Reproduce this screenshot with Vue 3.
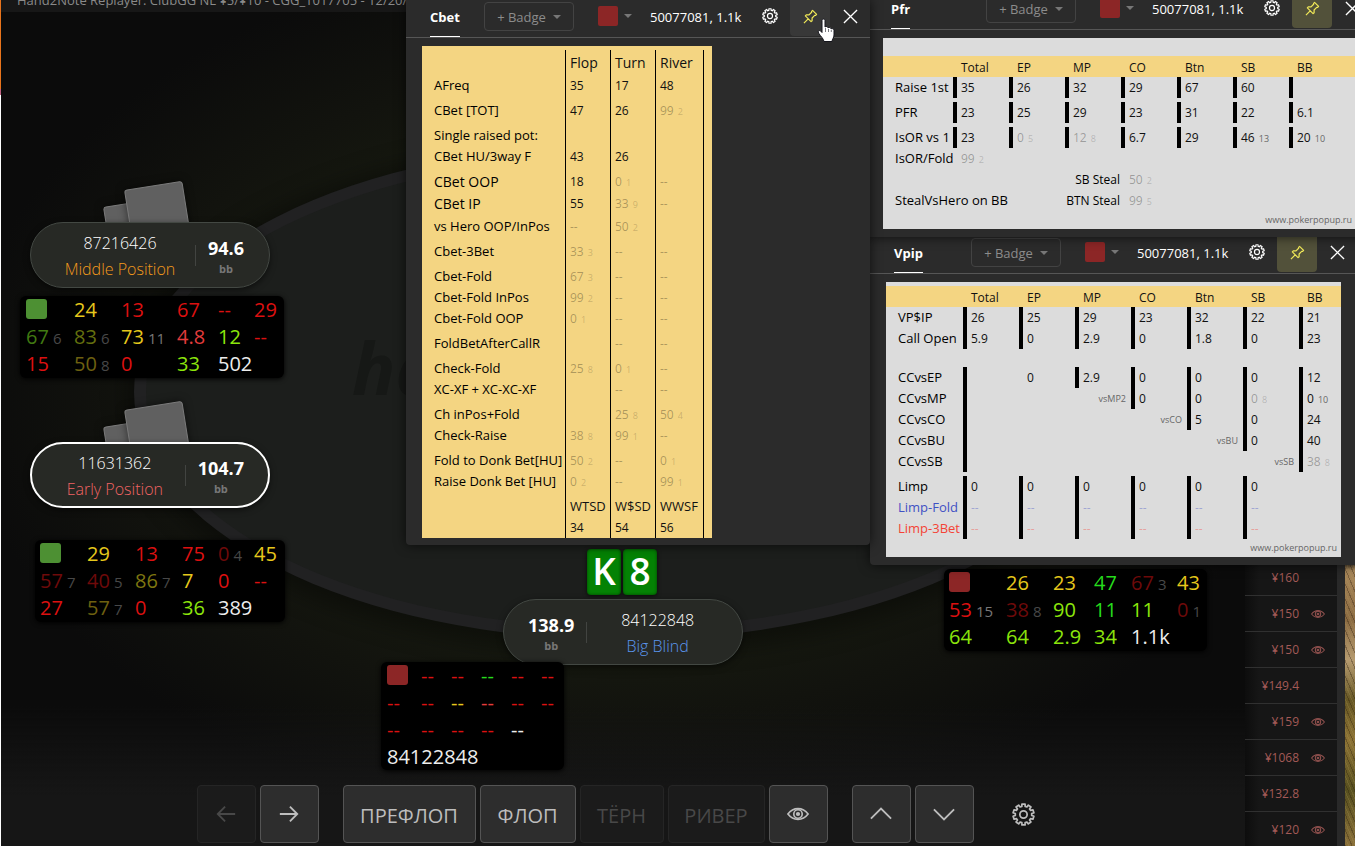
<script setup>
import { h } from 'vue'

function gearPath(teeth, outer, inner) {
  const step = (Math.PI * 2) / teeth
  const points = []
  for (let i = 0; i < teeth; i++) {
    const a = i * step - Math.PI / 2
    ;[[-0.24, outer], [0.24, outer], [0.32, inner], [0.68, inner]].forEach(([f, r]) => {
      points.push(`${(12 + Math.cos(a + f * step) * r).toFixed(2)} ${(12 + Math.sin(a + f * step) * r).toFixed(2)}`)
    })
  }
  return `M${points.join('L')}Z`
}

const stroke = { viewBox: '0 0 24 24', fill: 'none', stroke: 'currentColor', 'aria-hidden': 'true' }
const GearIcon = () => h('svg', { ...stroke, 'stroke-width': 1.8, 'stroke-linejoin': 'round' }, [
  h('path', { d: gearPath(10, 11, 8.6) }),
  h('circle', { cx: 12, cy: 12, r: 3.8 }),
])
const EyeIcon = () => h('svg', { ...stroke, 'stroke-width': 1.8 }, [
  h('path', { d: 'M1 12C4.5 7.4 8 6.2 12 6.2S19.500 7.400 23 12C19.500 16.600 16 17.800 12 17.800S4.500 16.600 1 12Z' }),
  h('circle', { cx: 12, cy: 12, r: 4.6 }),
  h('circle', { cx: 12, cy: 12, r: 1.4, fill: 'currentColor' }),
])

const cell = (t = '', n = '', dim = false) => ({ t, n, dim })
const D = cell('--', '', true)
const E = cell()
const d = (t, n) => cell(t, n, true)
const v = (t) => cell(t)

const cbetRows = [
  { label: 'AFreq', cells: [v('35'), v('17'), v('48')] },
  { label: 'CBet [TOT]', cls: 'spaced', cells: [v('47'), v('26'), d('99', '2')] },
  { label: 'Single raised pot:', cls: 'spaced', cells: [E, E, E] },
  { label: 'CBet HU/3way F', cells: [v('43'), v('26'), E] },
  { label: 'CBet OOP', cls: 'spaced large', cells: [v('18'), d('0', '1'), D] },
  { label: 'CBet IP', cls: 'large', cells: [v('55'), d('33', '9'), D] },
  { label: 'vs Hero OOP/InPos', cells: [D, d('50', '2'), E] },
  { label: 'Cbet-3Bet', cls: 'spaced', cells: [d('33', '3'), D, D] },
  { label: 'Cbet-Fold', cls: 'spaced', cells: [d('67', '3'), D, D] },
  { label: 'Cbet-Fold InPos', cells: [d('99', '2'), D, D] },
  { label: 'Cbet-Fold OOP', cells: [d('0', '1'), D, D] },
  { label: 'FoldBetAfterCallR', cls: 'spaced', cells: [E, D, D] },
  { label: 'Check-Fold', cls: 'spaced', cells: [d('25', '8'), d('0', '1'), D] },
  { label: 'XC-XF + XC-XC-XF', cells: [E, D, D] },
  { label: 'Ch inPos+Fold', cls: 'spaced', cells: [E, d('25', '8'), d('50', '4')] },
  { label: 'Check-Raise', cells: [d('38', '8'), d('99', '1'), D] },
  { label: 'Fold to Donk Bet[HU]', cls: 'spaced', cells: [d('50', '2'), D, d('0', '1')] },
  { label: 'Raise Donk Bet [HU]', cells: [d('0', '2'), D, d('99', '1')] },
  { label: '', cls: 'spaced totals', cells: [v('WTSD'), v('W$SD'), v('WWSF')] },
  { label: '', cells: [v('34'), v('54'), v('56')] },
]

const positions = ['Total', 'EP', 'MP', 'CO', 'Btn', 'SB', 'BB']
const bar = (t = '', n = '', dim = false) => ({ t, n, dim, bar: true })
const bars = (...values) => values.map((x) => bar(x))
const side = (t, span = 1) => ({ t, span, side: true })

const popups = [
  {
    id: 'vpip', title: 'Vpip', pinned: true,
    rows: [
      { label: 'VP$IP', cells: bars('26', '25', '29', '23', '32', '22', '21') },
      { label: 'Call Open', cells: bars('5.9', '0', '2.9', '0', '1.8', '0', '23') },
      { gap: 'wide' },
      { label: 'CCvsEP', cells: [bar(), v('0'), ...bars('2.9', '0', '0', '0', '12')] },
      { label: 'CCvsMP', cells: [bar(), E, { ...side('vsMP2'), small: true }, bar('0'), bar('0'), bar('0', '8', true), bar('0', '10')] },
      { label: 'CCvsCO', cells: [bar(), E, E, { ...side('vsCO'), small: true }, ...bars('5', '0', '24')] },
      { label: 'CCvsBU', cells: [bar(), E, E, E, { ...side('vsBU'), small: true }, ...bars('0', '40')] },
      { label: 'CCvsSB', cells: [bar(), E, E, E, E, { ...side('vsSB'), small: true }, bar('38', '8', true)] },
      { gap: 'thin' },
      { label: 'Limp', cells: [...bars('0', '0', '0', '0', '0', '0'), E] },
      { label: 'Limp-Fold', cls: 'blue', cells: [...Array.from({ length: 6 }, () => bar('--', '', true)), E] },
      { label: 'Limp-3Bet', cls: 'red', cells: [...Array.from({ length: 6 }, () => bar('--', '', true)), E] },
    ],
  },
  {
    id: 'pfr', title: 'Pfr', pinned: true,
    rows: [
      { label: 'Raise 1st', cells: bars('35', '26', '32', '29', '67', '60', '') },
      { gap: 'thin' },
      { label: 'PFR', cells: bars('23', '25', '29', '23', '31', '22', '6.1') },
      { gap: 'thin' },
      { label: 'IsOR vs 1', cells: [bar('23'), bar('0', '5', true), bar('12', '8', true), bar('6.7'), bar('29'), bar('46', '13'), bar('20', '10')] },
      { label: 'IsOR/Fold', cells: [d('99', '2'), E, E, E, E, E, E] },
      { label: '', cells: [E, side('SB Steal', 2), d('50', '2'), E, E, E] },
      { label: 'StealVsHero on BB', cells: [E, side('BTN Steal', 2), d('99', '5'), E, E, E] },
    ],
  },
  { id: 'cbet', title: 'Cbet', pinned: false },
]

const players = [
  { id: 'mp', name: '87216426', position: 'Middle Position', stack: '94.6', folded: true },
  { id: 'ep', name: '11631362', position: 'Early Position', stack: '104.7', folded: true },
  { id: 'hero', name: '84122848', position: 'Big Blind', stack: '138.9', folded: false },
]

const s = (t, c, n = '') => ({ t, c, n })
const x = (c = 'red') => s('--', c + ' dash')
const huds = [
  { id: 'mp', tag: 'green', cells: [
    s('24', 'yellow'), s('13', 'red'), s('67', 'red'), x(), s('29', 'red'),
    s('67', 'green-dim', '6'), s('83', 'olive-dim', '6'), s('73', 'yellow', '11'), s('4.8', 'rose'), s('12', 'lime'), x(),
    s('15', 'red'), s('50', 'yellow-dim', '8'), s('0', 'red'), s('33', 'lime'), s('502', 'white'),
  ] },
  { id: 'ep', tag: 'green', cells: [
    s('29', 'yellow'), s('13', 'red'), s('75', 'red'), s('0', 'red-dim', '4'), s('45', 'yellow'),
    s('57', 'red-dim', '7'), s('40', 'red-dim', '5'), s('86', 'olive', '7'), s('7', 'yellow'), s('0', 'red'), x(),
    s('27', 'red'), s('57', 'yellow-dim', '7'), s('0', 'red'), s('36', 'lime'), s('389', 'white'),
  ] },
  { id: 'btn', tag: 'crimson', cells: [
    s('26', 'yellow'), s('23', 'yellow'), s('47', 'green'), s('67', 'red-dim', '3'), s('43', 'yellow'),
    s('53', 'red', '15'), s('38', 'red-dim', '8'), s('90', 'lime'), s('11', 'green'), s('11', 'lime'), s('0', 'red-dim', '1'),
    s('64', 'lime'), s('64', 'lime'), s('2.9', 'lime'), s('34', 'lime'), s('1.1k', 'white'),
  ] },
  { id: 'hero', tag: 'crimson', name: '84122848', cells: [
    x(), x(), x('green'), x(), x(), x(), x(), x('yellow'), x('rose'), x(), x(), x(), x(), x(), x(), x('white'),
  ] },
]

const hands = [
  { amount: '¥160', eye: false }, { amount: '¥150', eye: true }, { amount: '¥150', eye: true },
  { amount: '¥149.4', eye: false }, { amount: '¥159', eye: true }, { amount: '¥1068', eye: true },
  { amount: '¥132.8', eye: false }, { amount: '¥120', eye: true },
]
</script>

<template>
  <div class="desktop">
    <main class="stage">
      <header class="titlebar"><span>Hand2Note Replayer: ClubGG NL ¥5/¥10 - CGG_1017705 - 12/20/2</span></header>
      <div class="felt"></div>
      <div class="watermark">ha</div>

      <section v-for="p in players" :key="p.id" class="seat" :class="'seat-' + p.id">
        <template v-if="p.folded">
          <span class="back back-rear"></span>
          <span class="back back-front"></span>
        </template>
        <div v-else class="hole-cards"><span>K</span><span>8</span></div>
        <div class="pill">
          <div class="who"><span class="name">{{ p.name }}</span><span class="position">{{ p.position }}</span></div>
          <div class="stack"><strong>{{ p.stack }}</strong><small>bb</small></div>
        </div>
      </section>

      <section v-for="hud in huds" :key="hud.id" class="hud" :class="'hud-' + hud.id">
        <span class="tag" :class="hud.tag"></span>
        <span v-for="(c, i) in hud.cells" :key="i" class="stat" :class="c.c">{{ c.t }}<small v-if="c.n">{{ c.n }}</small></span>
        <span v-if="hud.name" class="hud-name">{{ hud.name }}</span>
      </section>

      <nav class="toolbar" aria-label="Replayer">
        <div class="group">
          <button class="key square" disabled aria-label="Back"><svg viewBox="0 0 24 24" fill="none" stroke="currentColor" stroke-width="2"><path d="M22 12H3M11 4L3 12L11 20" /></svg></button>
          <button class="key square" aria-label="Forward"><svg viewBox="0 0 24 24" fill="none" stroke="currentColor" stroke-width="2"><path d="M2 12H21M13 4L21 12L13 20" /></svg></button>
        </div>
        <div class="group">
          <button class="key preflop">ПРЕФЛОП</button>
          <button class="key flop">ФЛОП</button>
          <button class="key turn" disabled>ТЁРН</button>
          <button class="key river" disabled>РИВЕР</button>
          <button class="key square" aria-label="Show cards"><EyeIcon /></button>
        </div>
        <div class="group">
          <button class="key square" aria-label="Previous hand"><svg viewBox="0 0 24 24" fill="none" stroke="currentColor" stroke-width="2"><path d="M1 17L12 6L23 17" /></svg></button>
          <button class="key square" aria-label="Next hand"><svg viewBox="0 0 24 24" fill="none" stroke="currentColor" stroke-width="2"><path d="M1 7L12 18L23 7" /></svg></button>
        </div>
        <button class="settings" aria-label="Settings"><GearIcon /></button>
      </nav>
    </main>

    <aside class="hands">
      <ul>
        <li v-for="(hand, i) in hands" :key="i"><span>{{ hand.amount }}</span><i><EyeIcon v-if="hand.eye" /></i></li>
      </ul>
    </aside>
    <div class="frame"></div>
    <div class="wallpaper"></div>

    <article v-for="w in popups" :key="w.id" class="popup" :class="'popup-' + w.id">
      <header class="popup-head">
        <h2>{{ w.title }}</h2>
        <button class="badge">+ Badge <b class="caret"></b></button>
        <button class="color" aria-label="Player colour"><i></i><b class="caret"></b></button>
        <span class="player">50077081, 1.1k</span>
        <button class="icon gear" aria-label="Settings"><GearIcon /></button>
        <button class="icon pin" :class="{ pinned: w.pinned }" aria-label="Pin">
          <svg viewBox="0 0 16 16" fill="none" stroke="currentColor" stroke-width="1.3" stroke-linejoin="round"><path d="M10.200 1.500L14.500 5.800L13.500 6.800H12.500L9.700 9.600V12.500L8.600 13.500L2.500 7.400L3.500 6.300H6.400L9.200 3.500V2.500ZM5.500 10.500L1 15" /></svg>
        </button>
        <button class="icon close" aria-label="Close"><svg viewBox="0 0 16 16" fill="none" stroke="currentColor" stroke-width="1.4"><path d="M1 1L15 15M15 1L1 15" /></svg></button>
      </header>

      <div v-if="w.id === 'cbet'" class="sheet yellow-sheet">
        <table>
          <thead><tr><th class="label"></th><th>Flop</th><th>Turn</th><th class="last">River</th><th class="edge"></th></tr></thead>
          <tbody>
            <tr v-for="(row, i) in cbetRows" :key="i" :class="row.cls">
              <th class="label">{{ row.label }}</th>
              <td v-for="(c, j) in row.cells" :key="j" :class="{ dim: c.dim }">{{ c.t }}<small v-if="c.n">{{ c.n }}</small></td>
              <td class="edge"></td>
            </tr>
          </tbody>
        </table>
      </div>

      <div v-else class="sheet grey-sheet">
        <table>
          <thead><tr><th class="label"></th><th v-for="p in positions" :key="p">{{ p }}</th></tr></thead>
          <tbody>
            <tr v-for="(row, i) in w.rows" :key="i" :class="[row.cls, row.gap]">
              <td v-if="row.gap" colspan="8"></td>
              <template v-else>
                <th class="label">{{ row.label }}</th>
                <td v-for="(c, j) in row.cells" :key="j" :colspan="c.span || 1" :class="{ dim: c.dim, bar: c.bar, side: c.side, small: c.small }">{{ c.t }}<small v-if="c.n">{{ c.n }}</small></td>
              </template>
            </tr>
          </tbody>
        </table>
        <footer>www.pokerpopup.ru</footer>
      </div>
    </article>

    <svg class="cursor" viewBox="0 0 18 25" aria-hidden="true">
      <path d="M5 2.500C5 .6 8 .6 8 2.500V9C9 8 11 8.300 11 9.800C12 9 14 9.300 14 10.800C15 10.200 17 10.800 17 12.500V17C17 20 15 21 15 23.500H7C6.500 20.500 3.800 18.500 1.500 15C.5 13 2.500 11.800 3.800 13L5 14.500Z" fill="#fff" stroke="#15151c" stroke-width="1" />
      <path d="M8.500 10V14M11.500 11V14M14.300 12V14" stroke="#55555c" stroke-width=".8" />
    </svg>
  </div>
</template>

<style>
body { margin: 0; background: #0b0b0b; }
</style>

<style scoped>
.desktop {
  position: relative;
  display: flex;
  min-height: 100vh;
  overflow: hidden;
  background: #0b0b0b;
  color: #fff;
  font-family: "Open Sans", "Noto Sans", sans-serif;
}
.desktop * { box-sizing: border-box; }
button { font: inherit; color: inherit; background: none; border: 0; padding: 0; margin: 0; }
svg { display: block; }

.stage {
  position: relative;
  flex: 1;
  display: flex;
  flex-direction: column;
  justify-content: space-between;
  border-left: 1px solid #fff;
  border-image: linear-gradient(#e8741c 0 90px, #c06080 90px 96px, #fff 96px) 1;
  background:
    linear-gradient(transparent calc(100% - 140px), #161616 calc(100% - 50px)),
    radial-gradient(ellipse 600px 400px at 50% 46%, #171a10 60%, #12130e 82%, #0b0b0b 110%);
}
.titlebar {
  display: flex;
  align-items: flex-end;
  height: 12px;
  padding: 0 0 2px 16px;
  overflow: hidden;
  background: #171717;
  color: #8a8a8a;
  font-size: 13px;
  line-height: 20px;
  white-space: nowrap;
}
.felt {
  position: absolute;
  left: calc(50% - 489px);
  top: 144px;
  width: 978px;
  height: 496px;
  border: 12px solid #212122;
  border-radius: 50%;
  background: #1c1e1c;
  box-shadow: 0 4px 24px 8px #0006;
}
.watermark {
  position: absolute;
  left: 351px;
  top: 318px;
  color: #161816;
  font-size: 72px;
  font-style: italic;
  font-weight: 700;
  line-height: 98px;
}

.seat { position: absolute; width: 240px; height: 66px; }
.seat-mp { left: 29px; top: 222px; }
.seat-ep { left: 29px; top: 442px; }
.seat-hero { left: calc(50% - 120px); top: 599px; }
.back {
  position: absolute;
  width: 59px;
  height: 60px;
  border: 1px solid #7a7a7a;
  border-radius: 3px;
  background: #606060;
  box-shadow: 0 0 8px #0008;
  transform: rotate(-9deg);
  transform-origin: 0 0;
}
.back-rear { left: 73px; top: -15px; }
.back-front { left: 94px; top: -32px; }
.pill {
  position: relative;
  display: flex;
  align-items: center;
  height: 66px;
  padding: 0 25px 0 14px;
  border: 1px solid #434843;
  border-radius: 33px;
  background: #272925;
  box-shadow: 0 2px 6px #0008;
}
.who { flex: 1; display: flex; flex-direction: column; align-items: center; gap: 4px; padding-top: 2px; font-size: 16px; font-weight: 300; line-height: 22px; white-space: nowrap; }
.stack { position: relative; display: flex; flex-direction: column; align-items: center; gap: 2px; padding: 2px 0 0 13px; }
.stack::before { content: ""; position: absolute; left: 0; top: 11px; height: 21px; border-left: 1px solid #424441; }
.stack strong { font-size: 18px; line-height: 24px; }
.stack small { color: #777; font-size: 11px; font-weight: 700; line-height: 14px; }
.seat-mp .position { color: #f49a1c; }
.seat-ep .position { color: #f06464; }
.seat-ep .pill { border: 2px solid #fff; padding: 0 24px 0 13px; }
.seat-hero .position { color: #5a96ee; }
.seat-hero .pill { flex-direction: row-reverse; padding: 0 14px 0 24px; }
.seat-hero .stack { padding: 2px 13px 0 0; }
.seat-hero .stack::before { left: auto; right: 0; }
.hole-cards { position: absolute; left: 84px; top: -50px; display: flex; gap: 2px; }
.hole-cards span {
  width: 34px;
  height: 46px;
  border-radius: 4px;
  background: #048204;
  box-shadow: inset 0 0 3px #0008, 0 1px 4px #000a;
  font-size: 37px;
  font-weight: 600;
  line-height: 44px;
  text-align: center;
}

.hud {
  position: absolute;
  display: grid;
  grid-auto-rows: 27px;
  align-items: center;
  border-radius: 6px;
  background: #000;
  box-shadow: 0 1px 5px #000;
  font-size: 20px;
  line-height: 26px;
  white-space: nowrap;
}
.hud-mp { left: 19px; top: 296px; width: 264px; padding: 0 0 1px 6px; grid-template-columns: 48px 47px 56px 41px 36px 1fr; }
.hud-ep { left: 34px; top: 540px; width: 250px; padding: 0 0 1px 5px; grid-template-columns: 47px 48px 47px 36px 36px 1fr; }
.hud-btn { left: 943px; top: 569px; width: 263px; padding: 0 0 1px 5px; grid-template-columns: 57px 47px 41px 37px 46px 1fr; }
.hud-hero { left: 380px; top: 662px; width: 183px; padding: 0 0 0 6px; grid-template-columns: 34px 30px 30px 30px 30px 1fr; }
.tag { width: 21px; height: 20px; margin-bottom: 1px; border-radius: 3px; }
.tag.green { background: #4d9033; }
.tag.crimson { background: #8c2626; }
.stat small { margin-left: 4px; color: #484848; font-size: 15px; line-height: 1; }
.hud-name { grid-column: 1 / -1; grid-row: 4; }
.stat.yellow { color: #e6c81c; }
.stat.yellow small, .stat.red small { color: #777; }
.stat.red { color: #dc1010; }
.stat.rose { color: #e33c3c; }
.stat.lime { color: #8ce60c; }
.stat.green { color: #26dc1c; }
.stat.white, .hud-name { color: #ededed; }
.stat.red-dim { color: #6e0a0a; }
.stat.green-dim { color: #417a12; }
.stat.olive-dim { color: #64700e; }
.stat.olive { color: #7e7610; }
.stat.yellow-dim { color: #6e6010; }

.toolbar { position: relative; display: flex; justify-content: center; gap: 24px; padding-bottom: 3px; }
.group { display: flex; gap: 4px; }
.key {
  display: flex;
  align-items: center;
  justify-content: center;
  height: 58px;
  border: 1px solid #545454;
  border-radius: 4px;
  background: #2d2d2d;
  color: #bdbdbd;
  font-size: 20px;
}
.preflop, .flop, .turn, .river { padding-top: 3px; }
.key svg { width: 22px; height: 22px; }
.key:disabled { border-color: #252525; background: #1b1b1b; color: #484848; }
.square { width: 59px; }
.preflop { width: 133px; }
.flop { width: 96px; }
.turn { width: 84px; }
.river { width: 97px; }
.settings { display: flex; align-items: center; justify-content: center; width: 52px; color: #bdbdbd; }
.settings svg { width: 23px; height: 23px; }

.hands { display: flex; flex-direction: column; justify-content: flex-end; width: 92px; background: linear-gradient(90deg, #0d0d0d, #161616 14px); }
.hands ul { list-style: none; margin: 0 0 -1px; padding: 0; }
.hands li { display: flex; align-items: center; justify-content: flex-end; height: 36px; padding-right: 12px; border-top: 1px solid #303030; color: #a35a57; font-size: 12px; }
.hands i { width: 14px; margin-left: 12px; opacity: .85; }
.frame { width: 8px; background: #292929; }
.wallpaper {
  width: 10px;
  background:
    repeating-linear-gradient(67deg, #2a1c0a55 0 1px, transparent 1px 3px, #b5a06033 3px 4px, transparent 4px 6px),
    linear-gradient(transparent 560px, #a8875a 570px, #8b6b42 620px, #b59a70 660px, #665724 700px, #8d7335 740px, #57501f 790px, #8a703a);
}

.popup { position: absolute; background: #2b2b2b; box-shadow: 0 0 12px #000a; border-radius: 0 0 4px 4px; }
.popup-cbet { left: 406px; top: 0; width: 464px; padding-bottom: 7px; }
.popup-pfr { left: 867px; top: -8px; width: 505px; padding-bottom: 8px; }
.popup-vpip { left: 870px; top: 236px; width: 487px; padding-bottom: 8px; }
.popup-head { display: flex; height: 38px; border-bottom: 1px solid #565656; white-space: nowrap; }
.popup-head h2 { margin: 0 auto 0 24px; border-bottom: 1px solid #fff; font-size: 13px; font-weight: 700; line-height: 34px; }
.badge {
  display: flex;
  align-items: center;
  justify-content: center;
  gap: 7px;
  width: 90px;
  height: 29px;
  margin: 2px 24px 0 0;
  border: 1px solid #434343;
  border-radius: 4px;
  color: #8c8c8c;
  font-size: 13px;
}
.caret { border: 4px solid transparent; border-top-color: #777; border-bottom: 0; }
.color { display: flex; align-items: center; gap: 6px; height: 31px; margin-right: 18px; }
.color i { width: 20px; height: 20px; border-radius: 2px; background: #8c2626; }
.player { width: 100px; font-size: 13px; line-height: 34px; }
.icon { display: flex; align-items: center; justify-content: center; width: 40px; height: 36px; padding-bottom: 4px; }
.gear svg { width: 16px; height: 16px; }
.pin { border-radius: 0 0 4px 4px; background: #383838; color: #f0e858; }
.pin svg { width: 15px; height: 15px; }
.pinned { background: #52513a; }
.close svg { width: 15px; height: 15px; }

.sheet { margin: 8px 16px 0; color: #111; font-size: 12px; line-height: 22px; white-space: nowrap; }
.sheet table { width: 100%; border-collapse: separate; border-spacing: 0; table-layout: fixed; }
.sheet th, .sheet td { padding: 0; font-weight: 400; text-align: left; height: 21px; line-height: 21px; overflow: visible; vertical-align: top; }
.sheet td small { margin-left: 4px; font-size: 9px; line-height: 1; opacity: .6; }
.sheet .label { padding-left: 12px; color: #000; font-size: 13px; }
.sheet .dim { color: #0000004d; }

.yellow-sheet { width: 290px; padding-top: 4px; background: #f4d582; }
.yellow-sheet thead th { width: 45px; height: 25px; font-size: 14px; line-height: 25px; }
.yellow-sheet thead .label { width: 143px; }
.yellow-sheet thead .last { width: 48px; }
.yellow-sheet thead .edge { width: 9px; }
.yellow-sheet td, .yellow-sheet thead th:not(.label) { padding-left: 4px; border-left: 1px solid #000; }
.yellow-sheet td.edge, .yellow-sheet thead th.edge { padding: 0; }
.yellow-sheet tr.spaced > * { padding-top: 4px; height: 25px; }
.yellow-sheet tr.large > * { height: 23px; line-height: 22px; }
.yellow-sheet tr.large.spaced > * { height: 26px; }
.yellow-sheet tr.large .label { font-size: 14px; }
.yellow-sheet tr.totals td { font-size: 13px; }

.grey-sheet { padding-top: 4px; background: #dcdcdc; }
.popup-pfr .grey-sheet { padding-top: 18px; }
.grey-sheet thead { background: #f4d582; }
.grey-sheet thead th { width: 56px; padding: 2px 0 0 8px; line-height: 19px; }
.grey-sheet thead .label { width: 70px; }
.popup-vpip .grey-sheet thead .label { width: 77px; }
.grey-sheet thead th:last-child { width: auto; }
.grey-sheet td { padding-left: 4px; border-left: 4px solid transparent; }
.grey-sheet td.bar { border-left-color: #000; }
.grey-sheet td.side { padding-right: 1px; text-align: right; }
.popup-pfr .grey-sheet td.side { color: #000; }
.grey-sheet td.small { padding-right: 5px; color: #666; font-size: 9px; }
.grey-sheet tr.thin td { height: 4px; line-height: 0; }
.grey-sheet tr.wide td { height: 18px; line-height: 0; }
.grey-sheet .blue .label { color: #3f51c4; }
.grey-sheet .red .label { color: #f44336; }
.grey-sheet .blue .dim { color: #3f51c466; }
.grey-sheet .red .dim { color: #f4433666; }
.grey-sheet footer { height: 18px; padding-right: 4px; color: #666; font-size: 9px; line-height: 18px; text-align: right; }

.cursor { position: absolute; left: 817px; top: 18px; width: 18px; height: 25px; }
</style>
